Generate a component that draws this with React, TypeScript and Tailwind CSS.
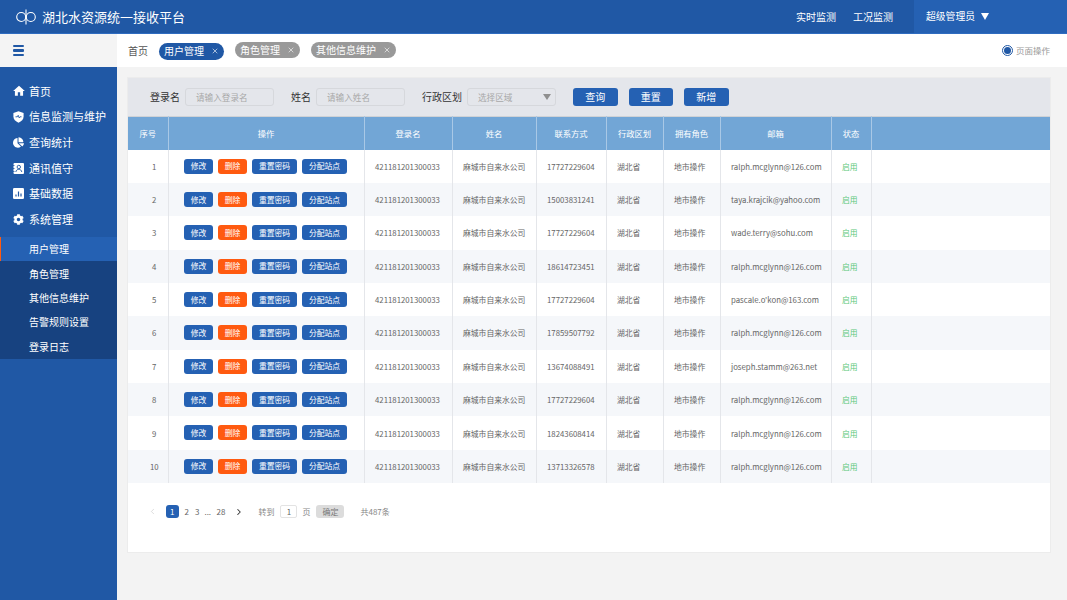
import React from "react";
import { FaChartPie, FaCog } from "react-icons/fa";
import { MdHome } from "react-icons/md";
import { X, ChevronLeft, ChevronRight } from "lucide-react";

const FONT = { fontFamily: '"Noto Sans CJK SC", "Noto Sans", sans-serif' };

const rows = [
  ["17727229604", "ralph.mcglynn@126.com"],
  ["15003831241", "taya.krajcik@yahoo.com"],
  ["17727229604", "wade.terry@sohu.com"],
  ["18614723451", "ralph.mcglynn@126.com"],
  ["17727229604", "pascale.o'kon@163.com"],
  ["17859507792", "ralph.mcglynn@126.com"],
  ["13674088491", "joseph.stamm@263.net"],
  ["17727229604", "ralph.mcglynn@126.com"],
  ["18243608414", "ralph.mcglynn@126.com"],
  ["13713326578", "ralph.mcglynn@126.com"],
];

const headers = ["序号", "操作", "登录名", "姓名", "联系方式", "行政区划", "拥有角色", "邮箱", "状态", ""];
const widths = ["w-[40px]", "w-[196px]", "w-[88px]", "w-[84px]", "w-[70px]", "w-[57px]", "w-[57px]", "w-[111px]", "w-[40px]", ""];

function Logo() {
  return (
    <svg width="20" height="16" viewBox="0 0 20 16" fill="none" stroke="white" strokeWidth="1.1">
      <circle cx="5.200" cy="8" r="4.500" />
      <circle cx="14.800" cy="8" r="4.500" />
      <path d="M10 0.500v15" />
    </svg>
  );
}

function Shield() {
  return (
    <svg width="11" height="12" viewBox="0 0 11 12">
      <path d="M5.500 0.300 10.600 2v3.600c0 2.900-2.100 5-5.100 6.100C2.500 10.600.4 8.500.4 5.600V2z" fill="white" />
      <path d="M2.500 5.800h1.800l.9-1.500 1 2.600.8-1.100h1.500" fill="none" stroke="#2058a5" strokeWidth="0.9" />
    </svg>
  );
}

function Contact() {
  return (
    <svg width="11" height="11" viewBox="0 0 11 11">
      <rect x="0.500" y="0" width="10.500" height="11" rx="1" fill="white" />
      <circle cx="5.800" cy="4" r="1.700" fill="none" stroke="#2058a5" strokeWidth="0.9" />
      <path d="M2.800 9c.4-1.800 1.500-2.700 3-2.700s2.600.9 3 2.700" fill="none" stroke="#2058a5" strokeWidth="0.9" />
      <path d="M0 2.500h1.500M0 5.500h1.500M0 8.500h1.500" stroke="#2058a5" strokeWidth="0.8" />
    </svg>
  );
}

function ChartBox() {
  return (
    <svg width="11" height="11" viewBox="0 0 11 11">
      <rect width="11" height="11" rx="1.300" fill="white" />
      <path d="M3 6.500v2M5.500 3.500v5M8 5.500v3" stroke="#2058a5" strokeWidth="1.200" />
    </svg>
  );
}

function Tab({ label, active }: { label: string; active?: boolean }) {
  return (
    <div
      className={`flex items-center whitespace-nowrap rounded-full text-white text-[10px] leading-none pl-[5px] pr-[5.500px] gap-[6.500px] ${
        active ? "h-[17px] bg-[#2058a5] mt-[1px]" : "h-[16px] bg-[#999999] -mt-[2px]"
      }`}
    >
      <span>{label}</span>
      <X size={8} strokeWidth={2} className="text-white/90" />
    </div>
  );
}

function Btn({ label, bg = "bg-[#2561b3]", w }: { label: string; bg?: string; w: string }) {
  return (
    <span className={`flex items-center justify-center h-[15px] rounded-[3px] text-white text-[7.800px] leading-none ${w} ${bg}`}>
      {label}
    </span>
  );
}

function FilterBtn({ label }: { label: string }) {
  return (
    <button className="w-[44.500px] h-[18px] rounded-[3px] bg-[#2561b3] text-white text-[10px] leading-none flex items-center justify-center">
      {label}
    </button>
  );
}

function Field({ label, placeholder, className }: { label: string; placeholder: string; className: string }) {
  return (
    <div className="flex items-center">
      <span className={`text-[10px] text-[#333333] leading-none ${className}`}>{label}</span>
      <div className="w-[89px] h-[18px] rounded-[3px] border border-[#d6d8dc] flex items-center pl-[10px] text-[8.600px] text-[#a8a8a8] leading-none">
        {placeholder}
      </div>
    </div>
  );
}

function MenuItem({ icon, label }: { icon: React.ReactNode; label: string }) {
  return (
    <div className="h-[25.600px] flex items-center pl-[13px] text-white text-[11px] leading-none">
      <span className="w-[16px] flex items-center shrink-0">{icon}</span>
      <span>{label}</span>
    </div>
  );
}

export default function App() {
  const td = "border-r border-[#e4e6ea] text-left align-middle p-0 pl-[10.500px] pt-[1px]";
  return (
    <div style={FONT} className="w-[1067px] h-[600px] overflow-hidden flex flex-col bg-[#f3f3f3]">
      <header className="h-[34px] shrink-0 flex items-center justify-between bg-[#2058a5] border-b border-[#2f6cc0] text-white">
        <div className="flex items-center pl-[16px]">
          <Logo />
          <span className="ml-[6px] text-[13px] leading-none">湖北水资源统一接收平台</span>
        </div>
        <div className="flex items-center h-full">
          <span className="text-[10px] leading-none mr-[17px]">实时监测</span>
          <span className="text-[10px] leading-none mr-[21px]">工况监测</span>
          <div className="w-[153px] h-full bg-[#2561b3] flex items-center pl-[12px]">
            <span className="text-[9.800px] leading-none">超级管理员</span>
            <span className="ml-[6px] w-0 h-0 border-l-[4.500px] border-r-[4.500px] border-t-[7px] border-l-transparent border-r-transparent border-t-white" />
          </div>
        </div>
      </header>

      <div className="flex flex-1 min-h-0">
        <aside className="w-[117px] shrink-0 flex flex-col bg-[#2058a5]">
          <div className="h-[33px] shrink-0 bg-[#f4f4f4] flex items-center pl-[13px]">
            <div className="flex flex-col gap-[2px] w-[11px]">
              <span className="h-[2.500px] bg-[#2058a5] rounded-[1px]" />
              <span className="h-[2.500px] bg-[#2058a5] rounded-[1px]" />
              <span className="h-[2.500px] bg-[#2058a5] rounded-[1px]" />
            </div>
          </div>
          <nav className="pt-[11.500px]">
            <MenuItem icon={<MdHome size={14} className="-ml-[1.500px]" />} label="首页" />
            <MenuItem icon={<Shield />} label="信息监测与维护" />
            <MenuItem icon={<FaChartPie size={11} />} label="查询统计" />
            <MenuItem icon={<Contact />} label="通讯值守" />
            <MenuItem icon={<ChartBox />} label="基础数据" />
            <MenuItem icon={<FaCog size={11} />} label="系统管理" />
          </nav>
          <div className="mt-[5px] bg-[#174280] text-white text-[10px] leading-none">
            <div className="h-[24.400px] flex items-center pl-[28px] bg-[#2561b3] border-l-[1px] border-[#ff5a10]">用户管理</div>
            <div className="h-[24.400px] flex items-center pl-[29px]">角色管理</div>
            <div className="h-[24.400px] flex items-center pl-[29px]">其他信息维护</div>
            <div className="h-[24.400px] flex items-center pl-[29px]">告警规则设置</div>
            <div className="h-[24.400px] flex items-center pl-[29px]">登录日志</div>
          </div>
        </aside>

        <main className="flex-1 min-w-0 flex flex-col">
          <div className="h-[33px] shrink-0 bg-white flex items-center pl-[11px] pr-[17px]">
            <span className="text-[10px] text-[#555555] leading-none mr-[11px]">首页</span>
            <div className="flex items-center gap-[11px]">
              <Tab label="用户管理" active />
              <Tab label="角色管理" />
              <Tab label="其他信息维护" />
            </div>
            <div className="ml-auto flex items-center gap-[3px] text-[8.500px] text-[#999999] leading-none">
              <span className="w-[11px] h-[11px] rounded-full border border-[#2058a5] flex items-center justify-center">
                <span className="w-[7px] h-[7px] rounded-full bg-[#2058a5]" />
              </span>
              页面操作
            </div>
          </div>

          <section className="ml-[11px] mr-[17px] mt-[11px] h-[474px] bg-white shadow-[0_0_0_1px_#ececec] flex flex-col">
            <div className="h-[38px] shrink-0 bg-[#e4e6eb] flex items-center pl-[22px]">
              <Field label="登录名" placeholder="请输入登录名" className="mr-[5px]" />
              <div className="w-[17px]" />
              <Field label="姓名" placeholder="请输入姓名" className="mr-[5px]" />
              <div className="w-[17px]" />
              <span className="text-[10px] text-[#333333] leading-none mr-[5px]">行政区划</span>
              <div className="w-[89px] h-[18px] rounded-[3px] border border-[#d6d8dc] flex items-center justify-between pl-[10px] pr-[4px] text-[8.600px] text-[#a8a8a8] leading-none">
                选择区域
                <span className="w-0 h-0 border-l-[4.500px] border-r-[4.500px] border-t-[6px] border-l-transparent border-r-transparent border-t-[#8f8f8f]" />
              </div>
              <div className="flex items-center gap-[11px] ml-[17px]">
                <FilterBtn label="查询" />
                <FilterBtn label="重置" />
                <FilterBtn label="新增" />
              </div>
            </div>

            <table className="w-full table-fixed border-collapse border-t border-[#cfd2d6]">
              <thead>
                <tr className="h-[33px] bg-[#72a6d6]">
                  {headers.map((h, i) => (
                    <th key={i} className={`${widths[i]} p-0 font-normal text-[8.300px] leading-none text-white text-center ${i < 9 ? "border-r border-[#a9c8e6]" : ""}`}>
                      {h}
                    </th>
                  ))}
                </tr>
              </thead>
              <tbody className="text-[7.800px] leading-none text-[#666666]">
                {rows.map((r, i) => (
                  <tr key={i} className={`h-[33.350px] ${i % 2 ? "bg-[#f5f7fa]" : "bg-white"}`}>
                    <td className="border-r border-[#e4e6ea] text-center align-middle p-0 pt-[1px]">
                      <span className="pl-[13px]">{i + 1}</span>
                    </td>
                    <td className="border-r border-[#e4e6ea] align-middle p-0">
                      <div className="flex items-center gap-[5px] pl-[15.500px]">
                        <Btn label="修改" w="w-[29px]" />
                        <Btn label="删除" w="w-[29px]" bg="bg-[#ff5a10]" />
                        <Btn label="重置密码" w="w-[45px]" />
                        <Btn label="分配站点" w="w-[45px]" />
                      </div>
                    </td>
                    <td className={td}>421181201300033</td>
                    <td className={td}>麻城市自来水公司</td>
                    <td className={td}>{r[0]}</td>
                    <td className={td}>湖北省</td>
                    <td className={td}>地市操作</td>
                    <td className={td}>{r[1]}</td>
                    <td className={`${td} text-[#5cc87a]`}>启用</td>
                    <td className="p-0" />
                  </tr>
                ))}
              </tbody>
            </table>

            <div className="flex items-center pl-[20px] pt-[22px] text-[8px] leading-none text-[#666666]">
              <ChevronLeft size={9} strokeWidth={1.500} className="text-[#c4c4c4]" />
              <span className="ml-[8.500px] w-[13.500px] h-[13.500px] rounded-[3px] bg-[#2561b3] text-white flex items-center justify-center">1</span>
              <span className="ml-[5.500px]">2</span>
              <span className="ml-[6px]">3</span>
              <span className="ml-[5px]">...</span>
              <span className="ml-[5.500px]">28</span>
              <ChevronRight size={10} strokeWidth={2.500} className="ml-[9px] text-[#333333]" />
              <span className="ml-[14px] text-[#888888]">转到</span>
              <span className="ml-[6px] w-[17px] h-[13px] rounded-[2px] border border-[#e3e3e3] flex items-center justify-center">1</span>
              <span className="ml-[5px] text-[#888888]">页</span>
              <span className="ml-[6px] w-[28px] h-[13px] rounded-[3px] bg-[#dcdcdc] text-[#777777] flex items-center justify-center">确定</span>
              <span className="ml-[16px] text-[#888888]">共487条</span>
            </div>
          </section>
        </main>
      </div>
    </div>
  );
}
